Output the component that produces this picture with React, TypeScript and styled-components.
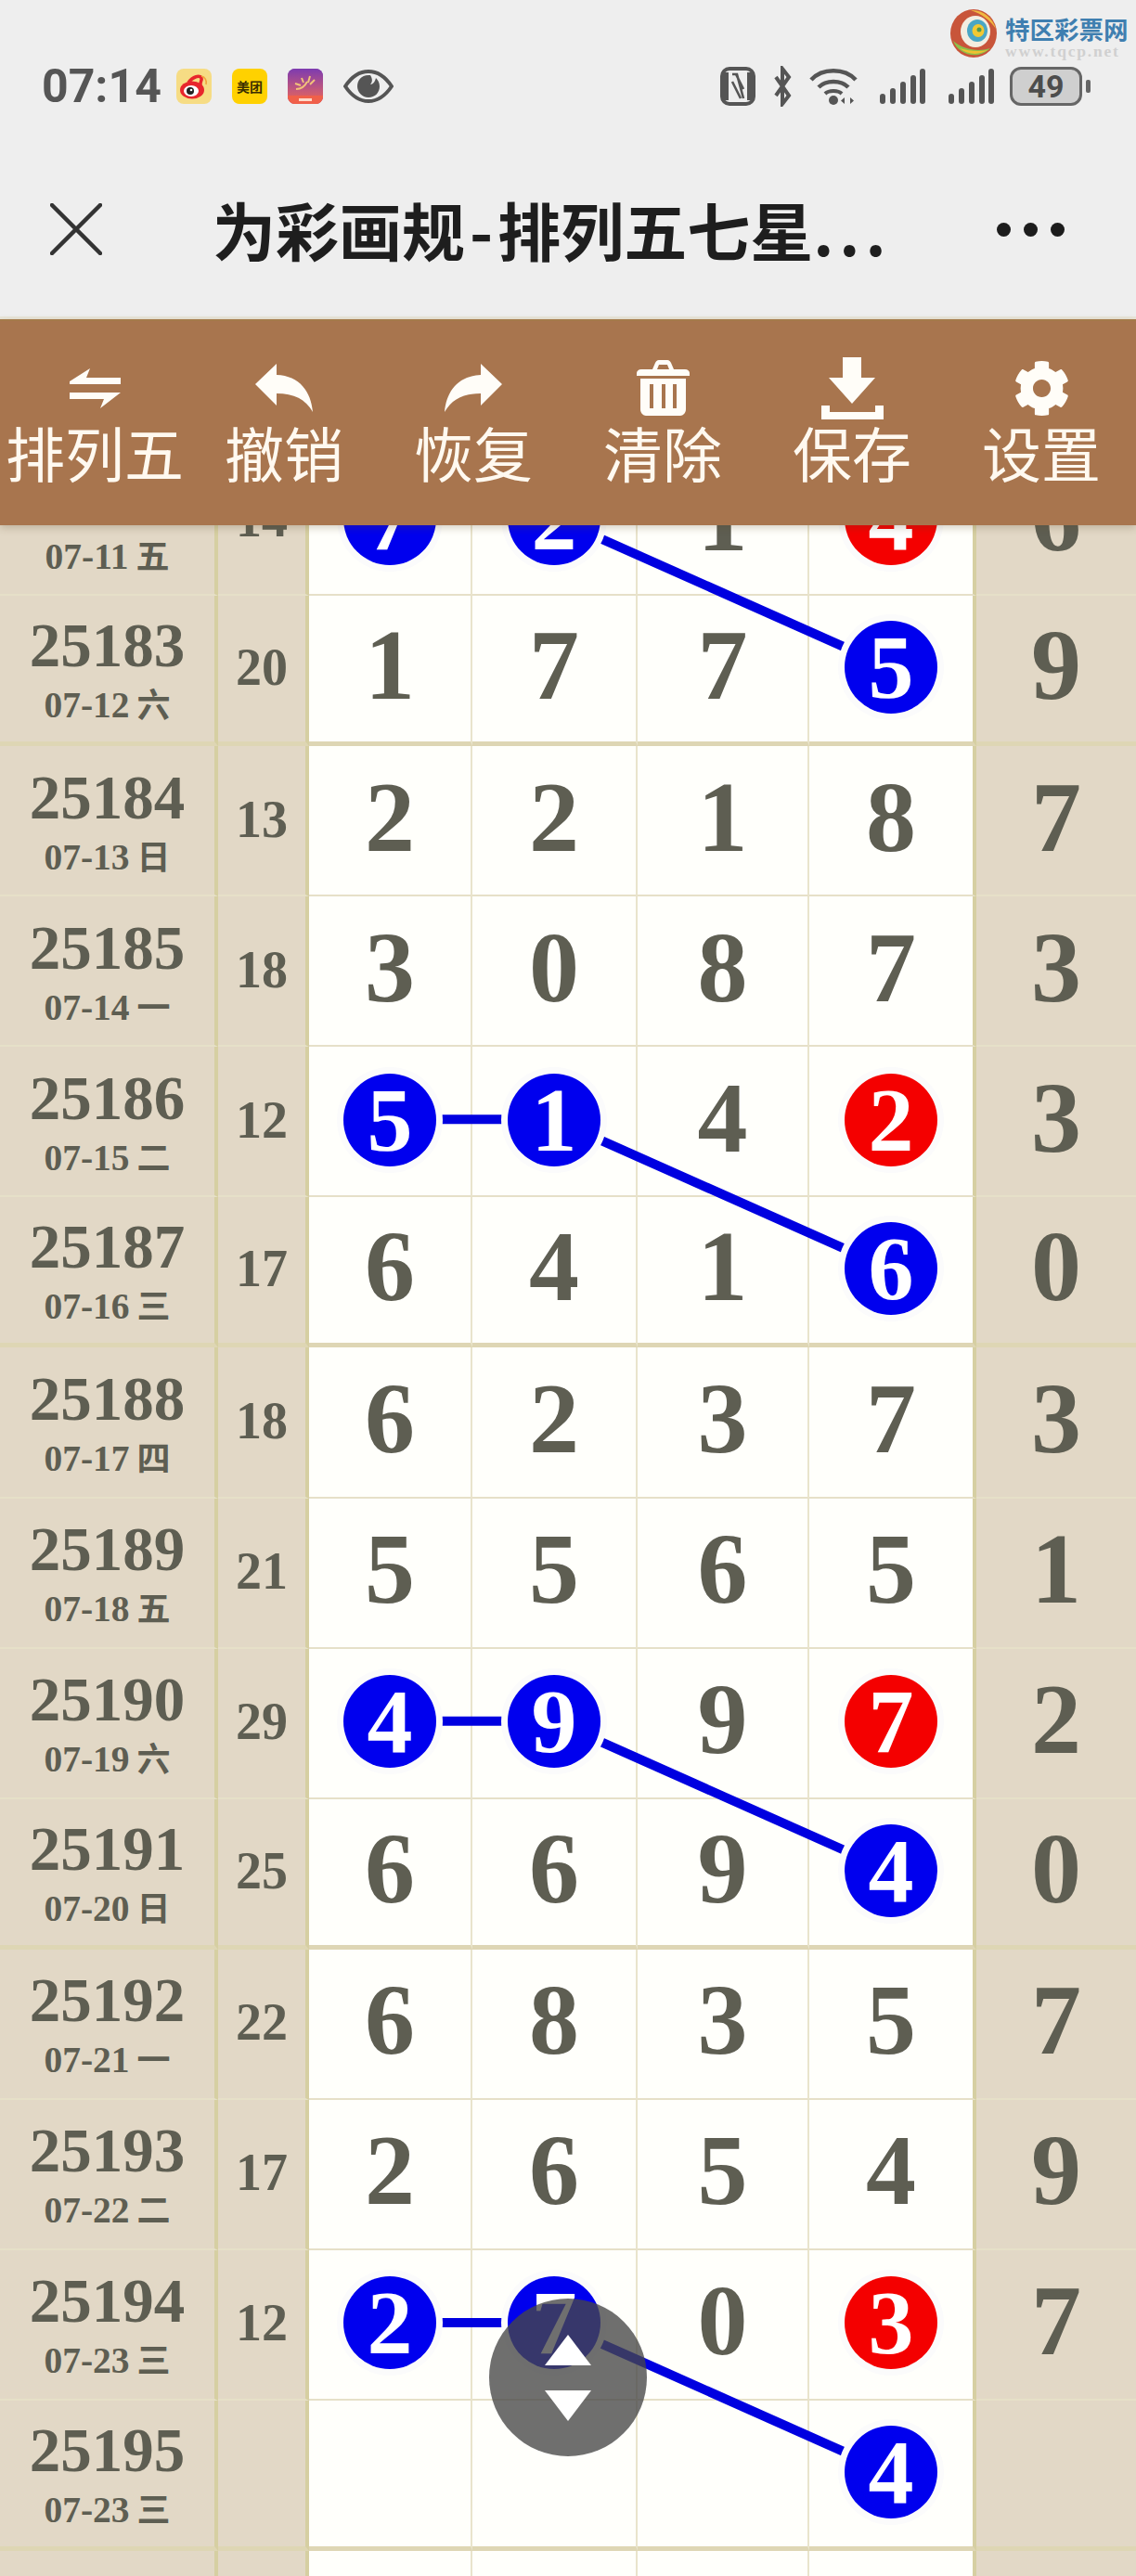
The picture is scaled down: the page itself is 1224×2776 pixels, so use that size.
import React from "react";
import styled, { createGlobalStyle } from "styled-components";
import { FaCog } from "react-icons/fa";

const ROW = 162.08;
const COLS = [235, 98, 176, 178, 185, 180, 172];
const SANS = `"Noto Sans CJK SC", "Noto Sans", sans-serif`;
const SERIF = `"Liberation Serif", "Noto Sans CJK SC", serif`;
const INK = "#5e5e52";

const Global = createGlobalStyle`
  html, body { margin: 0; padding: 0; background: #fff; }
  body { width: 1224px; height: 2776px; overflow: hidden; }
`;

const Page = styled.div`
  position: relative;
  width: 1224px;
  height: 2776px;
  display: flex;
  flex-direction: column;
  overflow: hidden;
`;

const Chrome = styled.header`
  height: 344px;
  flex: none;
  background: #eeeeee;
  border-bottom: 3px solid #e9e6da;
  box-sizing: border-box;
  display: flex;
  flex-direction: column;
`;

const StatusBar = styled.div`
  height: 70px;
  margin-top: 58px;
  padding: 0 49px 0 45px;
  display: flex;
  align-items: center;
  justify-content: space-between;
`;

const StatusGroup = styled.div`
  display: flex;
  align-items: center;
`;

const Clock = styled.span`
  font: 700 50px/42px Roboto, sans-serif;
  color: #555;
  width: 145px;
`;

const AppIcon = styled.span<{ $bg: string }>`
  width: 38px;
  height: 38px;
  border-radius: 8px;
  margin-right: 22px;
  background: ${(p) => p.$bg};
  display: inline-flex;
  align-items: center;
  justify-content: center;
  overflow: hidden;
`;

const MeituanMark = styled.span`
  font: 700 14px/1 ${SANS};
  color: #3a2f00;
  white-space: nowrap;
`;

const BatteryBody = styled.span`
  width: 78px;
  height: 42px;
  box-sizing: border-box;
  border: 3px solid #666;
  border-radius: 12px;
  background: #cfcfcf;
  display: flex;
  align-items: center;
  justify-content: center;
  font: 700 34px/1 Roboto, sans-serif;
  color: #4d4d4d;
`;

const BatteryTip = styled.span`
  width: 5px;
  height: 14px;
  margin-left: 4px;
  border-radius: 2px;
  background: #666;
`;

const TitleBar = styled.div`
  flex: 1;
  padding: 25px 77px 0 54px;
  display: flex;
  align-items: center;
`;

const Title = styled.h1`
  margin: 0 0 0 119px;
  flex: 1;
  font: 700 68px/80px ${SANS};
  color: #1e1e1e;
  white-space: nowrap;
`;

const Hyphen = styled.span`
  padding: 0 5px;
`;

const Ellipsis = styled.span`
  letter-spacing: 6px;
`;

const Dots = styled.div`
  display: flex;
  gap: 14px;
`;

const Dot = styled.span`
  width: 15px;
  height: 15px;
  border-radius: 50%;
  background: #1c1c1c;
`;

const Watermark = styled.div`
  position: absolute;
  top: 10px;
  left: 1024px;
  display: flex;
  gap: 9px;
`;

const WatermarkText = styled.div`
  display: flex;
  flex-direction: column;
  padding-top: 5px;
`;

const WatermarkName = styled.span`
  font: 700 26.5px/31px ${SANS};
  color: #3f7fb0;
  white-space: nowrap;
`;

const WatermarkUrl = styled.span`
  font: 700 17.5px/18px ${SERIF};
  letter-spacing: 1.8px;
  color: #d0d0d0;
  white-space: nowrap;
`;

const Toolbar = styled.nav`
  position: relative;
  z-index: 3;
  height: 222px;
  flex: none;
  background: #a8754e;
  border-top: 2px solid #a47a4a;
  box-sizing: border-box;
  box-shadow: 0 3px 8px rgba(90, 70, 40, 0.25);
  display: grid;
  grid-template-columns: repeat(6, 204px);
`;

const Tool = styled.button`
  border: 0;
  padding: 0;
  background: none;
  color: #fff9f0;
  display: flex;
  flex-direction: column;
  align-items: center;
  position: relative;
`;

const ToolIcon = styled.span`
  height: 78px;
  margin-top: 33px;
  display: flex;
  align-items: center;
  justify-content: center;
  color: #fffdf8;
`;

const ToolLabel = styled.span`
  font: 400 64px/70px ${SANS};
  white-space: nowrap;
  margin-top: -6px;
`;

const Viewport = styled.main`
  flex: 1;
  overflow: hidden;
  position: relative;
  background: #fff;
`;

const Board = styled.div`
  position: relative;
  margin-top: -86px;
  display: grid;
  grid-template-columns: ${COLS.map((c) => `${c}px`).join(" ")};
  grid-auto-rows: ${ROW}px;
`;

const Cell = styled.div<{ $side?: boolean; $thick?: boolean; $vthick?: boolean; $end?: boolean }>`
  box-sizing: border-box;
  padding-bottom: 3px;
  background: ${(p) => (p.$side ? "#e2d8c6" : "#fffffb")};
  border-bottom: ${(p) => (p.$thick ? "5px solid #ded6b4" : "2px solid #e6e0c8")};
  border-right: ${(p) => (p.$end ? "0" : p.$vthick ? "4px solid #d6cfa2" : "2px solid #e9e4cc")};
  display: flex;
  flex-direction: column;
  align-items: center;
  justify-content: center;
  color: ${INK};
`;

const Issue = styled.span`
  font: 700 67px/56px ${SERIF};
  margin-top: 12px;
`;

const DateText = styled.span`
  font: 700 39.5px/46px ${SERIF};
  white-space: nowrap;
  margin-top: 11px;
`;

const Week = styled.span`
  font: 700 36px/46px ${SANS};
  margin-left: 8px;
`;

const Sum = styled.span`
  font: 700 56px/1 ${SERIF};
`;

const Digit = styled.span`
  font: 700 108px/1 ${SERIF};
  margin-bottom: 4px;
`;

const Ball = styled.span<{ $red?: boolean }>`
  position: relative;
  z-index: 2;
  width: 100px;
  height: 100px;
  border-radius: 50%;
  background: ${(p) => (p.$red ? "#f40000" : "#0000ee")};
  box-shadow: 0 0 0 7px #fbfbfb;
  color: #fff;
  font: 700 98px/100px ${SERIF};
  text-align: center;
`;

const Links = styled.svg`
  position: absolute;
  top: 0;
  left: 0;
  z-index: 1;
  pointer-events: none;
`;

const Floater = styled.div`
  position: absolute;
  z-index: 4;
  left: 527px;
  top: 2477px;
  width: 170px;
  height: 170px;
  border-radius: 50%;
  background: rgba(70, 70, 70, 0.78);
  display: flex;
  flex-direction: column;
  align-items: center;
  justify-content: center;
  gap: 27px;
`;

const Tri = styled.span<{ $down?: boolean }>`
  width: 0;
  height: 0;
  border-left: 25px solid transparent;
  border-right: 25px solid transparent;
  border-${(p) => (p.$down ? "top" : "bottom")}: 33px solid #fff;
`;

type Num = number | { b: number } | { r: number } | null;
type Row = { id: number; date: string; week: string; sum: number | null; nums: Num[]; last: number | null };

const b = (n: number) => ({ b: n });
const r = (n: number) => ({ r: n });

const rows: Row[] = [
  { id: 25182, date: "07-11", week: "五", sum: 14, nums: [b(7), b(2), 1, r(4)], last: 6 },
  { id: 25183, date: "07-12", week: "六", sum: 20, nums: [1, 7, 7, b(5)], last: 9 },
  { id: 25184, date: "07-13", week: "日", sum: 13, nums: [2, 2, 1, 8], last: 7 },
  { id: 25185, date: "07-14", week: "一", sum: 18, nums: [3, 0, 8, 7], last: 3 },
  { id: 25186, date: "07-15", week: "二", sum: 12, nums: [b(5), b(1), 4, r(2)], last: 3 },
  { id: 25187, date: "07-16", week: "三", sum: 17, nums: [6, 4, 1, b(6)], last: 0 },
  { id: 25188, date: "07-17", week: "四", sum: 18, nums: [6, 2, 3, 7], last: 3 },
  { id: 25189, date: "07-18", week: "五", sum: 21, nums: [5, 5, 6, 5], last: 1 },
  { id: 25190, date: "07-19", week: "六", sum: 29, nums: [b(4), b(9), 9, r(7)], last: 2 },
  { id: 25191, date: "07-20", week: "日", sum: 25, nums: [6, 6, 9, b(4)], last: 0 },
  { id: 25192, date: "07-21", week: "一", sum: 22, nums: [6, 8, 3, 5], last: 7 },
  { id: 25193, date: "07-22", week: "二", sum: 17, nums: [2, 6, 5, 4], last: 9 },
  { id: 25194, date: "07-23", week: "三", sum: 12, nums: [b(2), b(7), 0, r(3)], last: 7 },
  { id: 25195, date: "07-23", week: "三", sum: null, nums: [null, null, null, b(4)], last: null },
];

const thickAfter = new Set([25183, 25187, 25191, 25195]);

const colCentre = (c: number) => {
  const left = COLS.slice(0, c + 2).reduce((a, v) => a + v, 0);
  return left + (COLS[c + 2] - 2) / 2;
};
const rowCentre = (i: number) => i * ROW + ROW / 2 - 3;

const links: [number, number, number, number][] = [
  [0, 0, 0, 1],
  [0, 1, 1, 3],
  [4, 0, 4, 1],
  [4, 1, 5, 3],
  [8, 0, 8, 1],
  [8, 1, 9, 3],
  [12, 0, 12, 1],
  [12, 1, 13, 3],
];

const Renderable = ({ v }: { v: Num }) => {
  if (v === null) return null;
  if (typeof v === "number") return <Digit>{v}</Digit>;
  if ("b" in v) return <Ball>{v.b}</Ball>;
  return <Ball $red>{v.r}</Ball>;
};

const Weibo = () => (
  <svg width="38" height="38" viewBox="0 0 38 38">
    <ellipse cx="17" cy="23" rx="13" ry="9.5" fill="#e8262c" />
    <path d="M13 15c5-7 12-8 14-5 1 3-2 4-1 9" fill="none" stroke="#e8262c" strokeWidth="3.5" />
    <ellipse cx="16" cy="24" rx="8" ry="6" fill="#fff" />
    <circle cx="15" cy="24" r="4" fill="#222" />
    <circle cx="16" cy="23" r="1.3" fill="#fff" />
    <path d="M27 8c4 1 6 5 5 9" fill="none" stroke="#f1a23a" strokeWidth="1.6" />
  </svg>
);

const Festive = () => (
  <svg width="38" height="38" viewBox="0 0 38 38">
    <defs>
      <linearGradient id="fest" x1="0" y1="0" x2="0" y2="1">
        <stop offset="0" stopColor="#7d3bb0" />
        <stop offset="0.65" stopColor="#c85a76" />
        <stop offset="1" stopColor="#f0654a" />
      </linearGradient>
    </defs>
    <rect width="38" height="38" fill="url(#fest)" />
    <path d="M9 22c5 0 9-2 12-8M15 10l2 5M24 8l-2 7M29 12l-5 5M8 16l6 2" stroke="#f2c27a" strokeWidth="2" fill="none" />
    <rect x="0" y="29" width="38" height="9" fill="#f0604a" />
    <rect x="12" y="32" width="14" height="3" fill="#ffd9c8" />
  </svg>
);

const Eye = () => (
  <svg width="54" height="38" viewBox="0 0 54 38">
    <path d="M2 19C10 7 18 3 27 3s17 4 25 16C44 31 36 35 27 35S10 31 2 19Z" fill="none" stroke="#555" strokeWidth="4" />
    <path d="M27 7c-8 0-12 6-12 12s5 12 12 12 12-5 12-12c0-4-2-7-4-9-1 4-3 7-6 7 3-3 2-7 0-10Z" fill="#555" />
  </svg>
);

const Nfc = () => (
  <svg width="38" height="42" viewBox="0 0 38 42" style={{ marginRight: 17 }}>
    <rect x="2" y="2" width="34" height="38" rx="8" fill="none" stroke="#555" strokeWidth="4" />
    <rect x="2" y="6" width="7" height="30" fill="#555" />
    <rect x="29" y="6" width="7" height="30" fill="#555" />
    <path d="M13 8h5l7 26M13 16l9 18M17 8l8 16" fill="none" stroke="#555" strokeWidth="2.6" />
  </svg>
);

const Bt = () => (
  <svg width="24" height="44" viewBox="0 0 24 44" style={{ marginRight: 17 }}>
    <path d="M5 12 19 32 12 41 12 3 19 12 5 32" fill="none" stroke="#555" strokeWidth="4" />
  </svg>
);

const Wifi = () => (
  <svg width="52" height="42" viewBox="0 0 52 42" style={{ marginRight: 24 }}>
    <path d="M2 14C14 1 38 1 50 14" fill="none" stroke="#555" strokeWidth="4.5" />
    <path d="M10 22c8-8 24-8 32 0" fill="none" stroke="#555" strokeWidth="4.5" />
    <path d="M17 29c4-4 14-4 18 0" fill="none" stroke="#555" strokeWidth="4" />
    <circle cx="26" cy="36" r="5" fill="#555" />
    <path d="M38 33v7l-4-3.500ZM44 33v7l4-3.500Z" fill="#555" />
  </svg>
);

const Signal = ({ gap }: { gap: number }) => (
  <svg width="50" height="42" viewBox="0 0 50 42" style={{ marginRight: gap }}>
    <rect x="0" y="29" width="6" height="11" rx="3" fill="#555" />
    <rect x="11" y="23" width="6" height="17" rx="3" fill="#555" />
    <rect x="22" y="16" width="6" height="24" rx="3" fill="#555" />
    <rect x="43" y="2" width="6" height="38" rx="3" fill="#555" />
    <rect x="33" y="9" width="6" height="31" rx="3" fill="#555" />
  </svg>
);

const Logo = () => (
  <svg width="50" height="52" viewBox="0 0 50 52">
    <ellipse cx="25" cy="26" rx="25" ry="26" fill="#c8553a" />
    <path d="M3 34c5 14 26 22 40 8C30 46 15 44 3 34Z" fill="#8cc04a" />
    <path d="M10 42c10 8 22 7 30 2-10 2-20 1-30-2Z" fill="#f0c030" />
    <path d="M22 1c12-1 24 8 27 20-6-9-15-16-27-20Z" fill="#f0b840" />
    <ellipse cx="27" cy="24" rx="16" ry="17" fill="#f3ede0" />
    <ellipse cx="29" cy="23" rx="11" ry="12" fill="#4aa6c4" />
    <ellipse cx="30" cy="23" rx="6.500" ry="7" fill="#f2c832" />
    <circle cx="31" cy="22" r="2.500" fill="#4f9a50" />
  </svg>
);

const Close = () => (
  <svg width="56" height="56" viewBox="0 0 56 56">
    <path d="M2 2 54 54M54 2 2 54" stroke="#333" strokeWidth="4.500" strokeLinecap="round" />
  </svg>
);

const ExchangeIcon = () => (
  <svg width="55" height="43" viewBox="0 0 55 43" fill="currentColor">
    <path d="M0 14 22 0l-4 10h37v7H0ZM0 26h55L33 43l4-10H0Z" />
  </svg>
);

const replyPath = "M0 22 23 0v12c25 1 37 18 39 40-8-14-20-20-39-20v13Z";

const ReplyIcon = () => (
  <svg width="62" height="52" viewBox="0 0 62 52" fill="currentColor">
    <path d={replyPath} />
  </svg>
);

const ShareIcon = () => (
  <svg width="62" height="52" viewBox="0 0 62 52" fill="currentColor">
    <path d={replyPath} transform="matrix(-1 0 0 1 62 0)" />
  </svg>
);

const TrashIcon = () => (
  <svg width="57" height="60" viewBox="0 0 57 60" fill="currentColor">
    <path
      fillRule="evenodd"
      d="M17 10 20 3c.6-1.500 2-3 4-3h9c2 0 3.400 1.500 4 3l3 7h12c3 0 5 2 5 4v3H0v-3c0-2 2-4 5-4ZM22 10h13l-2-5H24ZM4 20h49v33c0 4-3 7-6 7H10c-3 0-6-3-6-7Zm10 6v26h4V26Zm13 0v26h4V26Zm12 0v26h4V26Z"
    />
  </svg>
);

const SaveIcon = () => (
  <svg width="67" height="67" viewBox="0 0 67 67" fill="currentColor">
    <path d="M23 0h20v22h15L33 50 8 22h15ZM0 52h9v7h49v-7h9v15H0Z" />
  </svg>
);

const tools: [string, React.ReactNode][] = [
  ["排列五", <ExchangeIcon />],
  ["撤销", <ReplyIcon />],
  ["恢复", <ShareIcon />],
  ["清除", <TrashIcon />],
  ["保存", <SaveIcon />],
  ["设置", <FaCog size={61} />],
];

export default function App() {
  const boardWidth = COLS.reduce((a, v) => a + v, 0);
  const cellsCount = rows.length + 1;
  return (
    <Page>
      <Global />
      <Chrome>
        <StatusBar>
          <StatusGroup>
            <Clock>07:14</Clock>
            <AppIcon $bg="#f6dc84"><Weibo /></AppIcon>
            <AppIcon $bg="#ffd100"><MeituanMark>美团</MeituanMark></AppIcon>
            <AppIcon $bg="#7d3bb0"><Festive /></AppIcon>
            <Eye />
          </StatusGroup>
          <StatusGroup>
            <Nfc />
            <Bt />
            <Wifi />
            <Signal gap={24} />
            <Signal gap={16} />
            <BatteryBody>49</BatteryBody>
            <BatteryTip />
          </StatusGroup>
        </StatusBar>
        <TitleBar>
          <Close />
          <Title>为彩画规<Hyphen>-</Hyphen>排列五七星<Ellipsis>...</Ellipsis></Title>
          <Dots><Dot /><Dot /><Dot /></Dots>
        </TitleBar>
      </Chrome>
      <Watermark>
        <Logo />
        <WatermarkText>
          <WatermarkName>特区彩票网</WatermarkName>
          <WatermarkUrl>www.tqcp.net</WatermarkUrl>
        </WatermarkText>
      </Watermark>
      <Toolbar>
        {tools.map(([label, icon]) => (
          <Tool key={label}>
            <ToolIcon>{icon}</ToolIcon>
            <ToolLabel>{label}</ToolLabel>
          </Tool>
        ))}
      </Toolbar>
      <Viewport>
        <Board>
          {rows.map((row) => {
            const thick = thickAfter.has(row.id);
            return (
              <React.Fragment key={row.id}>
                <Cell $side $thick={thick} $vthick>
                  <Issue>{row.id}</Issue>
                  <DateText>{row.date}<Week>{row.week}</Week></DateText>
                </Cell>
                <Cell $side $thick={thick} $vthick>
                  {row.sum !== null && <Sum>{row.sum}</Sum>}
                </Cell>
                {row.nums.map((n, i) => (
                  <Cell key={i} $thick={thick} $vthick={i === 3}>
                    <Renderable v={n} />
                  </Cell>
                ))}
                <Cell $side $thick={thick} $end>
                  {row.last !== null && <Digit>{row.last}</Digit>}
                </Cell>
              </React.Fragment>
            );
          })}
          {COLS.map((_, i) => (
            <Cell key={i} $side={i < 2 || i === 6} $vthick={i < 2 || i === 5} $end={i === 6} />
          ))}
          <Links width={boardWidth} height={cellsCount * ROW}>
            {links.map(([r1, c1, r2, c2], i) => (
              <line
                key={i}
                x1={colCentre(c1)}
                y1={rowCentre(r1)}
                x2={colCentre(c2)}
                y2={rowCentre(r2)}
                stroke="#0000e0"
                strokeWidth="10"
              />
            ))}
          </Links>
        </Board>
      </Viewport>
      <Floater>
        <Tri />
        <Tri $down />
      </Floater>
    </Page>
  );
}
